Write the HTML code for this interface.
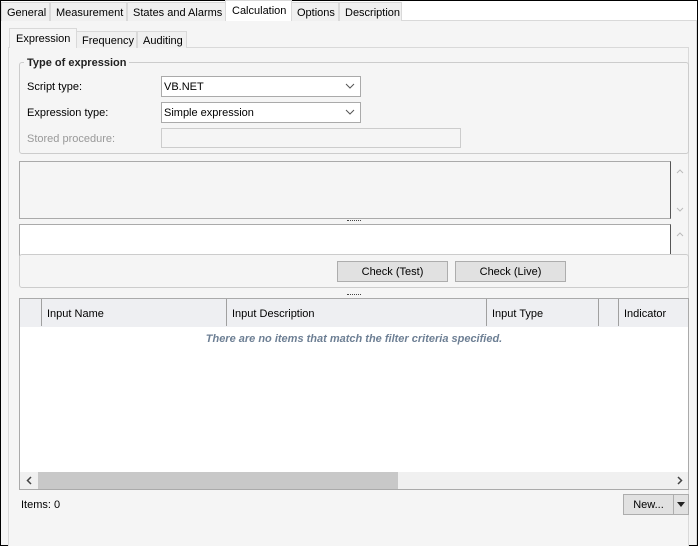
<!DOCTYPE html>
<html><head><style>
*{margin:0;padding:0;box-sizing:border-box}
body{width:698px;height:546px;position:relative;overflow:hidden;background:#fff;font-family:"Liberation Sans",sans-serif;font-size:11px;color:#000}
.a{position:absolute}
.tab{position:absolute;top:2px;height:19px;background:#f0f0f0;border:1px solid #d9d9d9;border-bottom:none;padding:4px 0 0 5px;font-size:11px}
.itab{position:absolute;top:31px;height:17px;background:#f0f0f0;border:1px solid #d9d9d9;border-bottom:none;padding:3px 0 0 5px}
.combo{position:absolute;background:#fff;border:1px solid #aaa;height:21px;padding:4px 0 0 2px}
.chev{position:absolute;right:5px;top:5px;width:10px;height:8px}
.btn{position:absolute;background:#e1e1e1;border:1px solid #adadad;text-align:center;padding-top:4px}
.dots{position:absolute;left:347px;width:14px;height:1px;border-top:1px dotted #444}
.hd{position:absolute;top:0;height:27px;border-left:1px solid #a0a0a0;padding:9px 0 0 5px}
</style></head><body>
<div class="a" style="left:0;top:0;width:698px;height:546px;border:1px solid #000"></div>
<div class="a" style="left:1px;top:20px;width:696px;height:525px;background:#f5f5f5;border-top:1px solid #d9d9d9;border-right:1px solid #d9d9d9"></div>
<div class="tab" style="left:1px;width:49px">General</div>
<div class="tab" style="left:50px;width:77px">Measurement</div>
<div class="tab" style="left:127px;width:99px">States and Alarms</div>
<div class="a" style="left:225px;top:0;width:67px;height:21px;background:#fff;border:1px solid #d9d9d9;border-bottom:none;padding:4px 0 0 6px">Calculation</div>
<div class="tab" style="left:291px;width:48px">Options</div>
<div class="tab" style="left:339px;width:63px">Description</div>

<div class="a" style="left:8px;top:47px;width:681px;height:499px;background:#f5f5f5;border-left:1px solid #d9d9d9;border-top:1px solid #d9d9d9;border-right:1px solid #d9d9d9"></div>
<div class="a" style="left:9px;top:28px;width:68px;height:20px;background:#f5f5f5;border:1px solid #d9d9d9;border-bottom:none;padding:4px 0 0 6px">Expression</div>
<div class="itab" style="left:76px;width:61px">Frequency</div>
<div class="itab" style="left:137px;width:50px">Auditing</div>

<div class="a" style="left:19px;top:62px;width:670px;height:92px;border:1px solid #ccc;border-radius:3px"></div>
<div class="a" style="left:24px;top:57px;padding:0 3px;background:#f5f5f5;font-weight:bold;font-size:11px;color:#222">Type of expression</div>
<div class="a" style="left:27px;top:81px">Script type:</div>
<div class="a" style="left:27px;top:107px">Expression type:</div>
<div class="a" style="left:27px;top:133px;color:#999">Stored procedure:</div>
<div class="combo" style="left:161px;top:76px;width:200px">VB.NET<svg class="chev" viewBox="0 0 10 8"><path d="M1 2l4 4 4-4" fill="none" stroke="#555"/></svg></div>
<div class="combo" style="left:161px;top:102px;width:200px">Simple expression<svg class="chev" viewBox="0 0 10 8"><path d="M1 2l4 4 4-4" fill="none" stroke="#555"/></svg></div>
<div class="a" style="left:161px;top:128px;width:300px;height:20px;border:1px solid #ccc;background:#f5f5f5"></div>

<div class="a" style="left:19px;top:161px;width:652px;height:58px;border:1px solid #aaa;border-right:1px solid #555;background:#f5f5f5"></div>
<svg class="a" style="left:676px;top:168px" width="8" height="6"><path d="M1 5l3-3 3 3" fill="none" stroke="#bbb"/></svg>
<svg class="a" style="left:676px;top:207px" width="8" height="6"><path d="M1 1l3 3 3-3" fill="none" stroke="#bbb"/></svg>
<div class="dots" style="top:220px"></div>
<div class="a" style="left:19px;top:224px;width:652px;height:32px;border:1px solid #aaa;border-right:1px solid #555;border-bottom:none;background:#fff"></div>
<svg class="a" style="left:676px;top:231px" width="8" height="6"><path d="M1 5l3-3 3 3" fill="none" stroke="#bbb"/></svg>
<div class="a" style="left:19px;top:254px;width:670px;height:34px;border:1px solid #ccc;border-radius:3px;background:#f5f5f5"></div>
<div class="btn" style="left:337px;top:261px;width:111px;height:21px">Check (Test)</div>
<div class="btn" style="left:455px;top:261px;width:111px;height:21px">Check (Live)</div>
<div class="dots" style="top:294px"></div>

<div class="a" style="left:19px;top:298px;width:670px;height:192px;border:1px solid #aaa;background:#fff;overflow:hidden">
 <div class="a" style="left:0;top:0;width:670px;height:28px;background:#eeeff2"></div>
 <div class="hd" style="left:21px">Input Name</div>
 <div class="hd" style="left:206px">Input Description</div>
 <div class="hd" style="left:466px">Input Type</div>
 <div class="hd" style="left:578px"></div>
 <div class="hd" style="left:598px">Indicator</div>
 <div class="a" style="left:0;top:34px;width:668px;text-align:center;font-style:italic;font-weight:bold;color:#6d7f94">There are no items that match the filter criteria specified.</div>
 <div class="a" style="left:0;top:173px;width:670px;height:17px;background:#f0f0f0"></div>
 <div class="a" style="left:18px;top:173px;width:360px;height:17px;background:#c8c8c8"></div>
 <svg class="a" style="left:6px;top:177px" width="6" height="9"><path d="M5 1L1.5 4.5 5 8" fill="none" stroke="#444" stroke-width="1.5"/></svg>
 <svg class="a" style="left:657px;top:177px" width="6" height="9"><path d="M1 1l3.5 3.5L1 8" fill="none" stroke="#444" stroke-width="1.5"/></svg>
</div>
<div class="a" style="left:21px;top:499px">Items: 0</div>
<div class="btn" style="left:623px;top:494px;width:51px;height:21px">New...</div>
<div class="a" style="left:673px;top:494px;width:16px;height:21px;border:1px solid #adadad;background:#e1e1e1"><svg style="position:absolute;left:3px;top:7px" width="8" height="5"><path d="M0 0h8L4 5z" fill="#222"/></svg></div>
</body></html>
